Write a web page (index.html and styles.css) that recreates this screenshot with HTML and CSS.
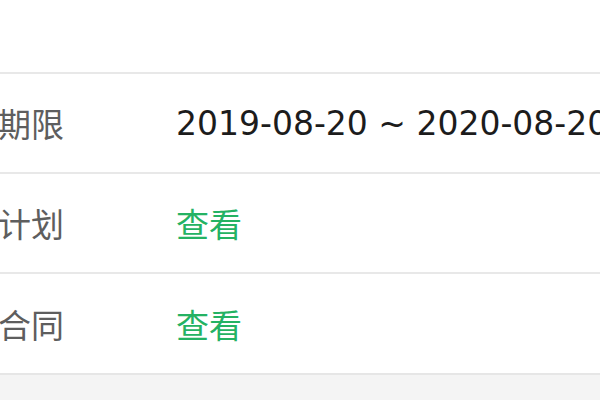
FILE: index.html
```html
<!DOCTYPE html>
<html lang="zh">
<head>
<meta charset="utf-8">
<link rel="stylesheet" href="styles.css">
</head>
<body>
<div class="page">
  <div class="list">
    <div class="spacer"></div>
    <div class="row">
      <div class="label">租赁期限</div>
      <div class="value">2019-08-20 ~ 2020-08-20</div>
    </div>
    <div class="row">
      <div class="label">还款计划</div>
      <div class="value link">查看</div>
    </div>
    <div class="row last">
      <div class="label">租赁合同</div>
      <div class="value link">查看</div>
    </div>
  </div>
</div>
</body>
</html>
```

FILE: styles.css
```css
html, body {
  margin: 0;
  padding: 0;
  background: #f4f4f4;
}
.page {
  width: 600px;
  height: 400px;
  overflow: hidden;
  font-family: "DejaVu Sans", "Noto Sans CJK SC", sans-serif;
}
.list {
  background: #ffffff;
  margin-left: -68px;
  width: 700px;
}
.spacer {
  height: 72px;
}
.row {
  display: flex;
  align-items: center;
  height: 98px;
  border-top: 2px solid #e8e8e8;
}
.row.last {
  border-bottom: 2px solid #e6e6e6;
  height: 99px;
}
.label {
  width: 244px;
  flex: none;
  font-family: "Noto Sans CJK SC", sans-serif;
  font-size: 33px;
  color: #5e5e5e;
  white-space: nowrap;
}
.value {
  font-size: 33px;
  color: #1c1c1c;
  white-space: nowrap;
}
.value.link {
  font-family: "Noto Sans CJK SC", sans-serif;
  color: #24b263;
}
```
